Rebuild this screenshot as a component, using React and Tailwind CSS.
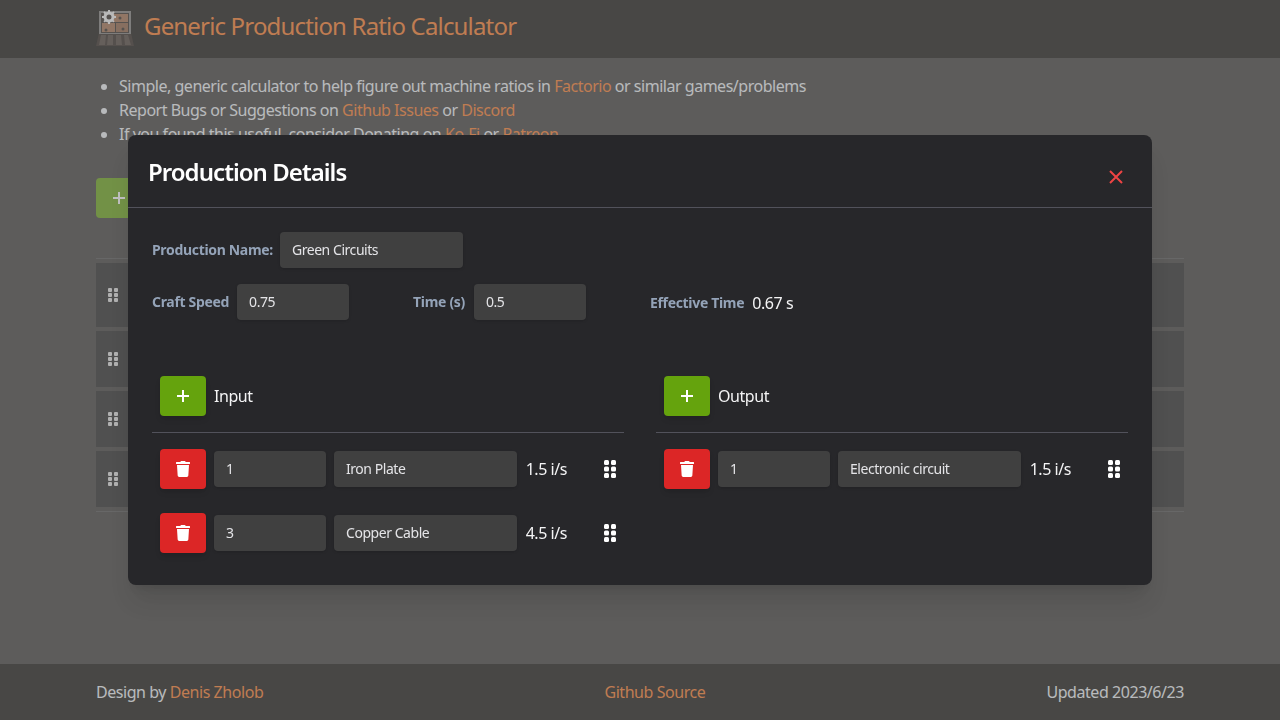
import { FaTrash } from "react-icons/fa";

const FONT = "font-['Noto_Sans','Open_Sans',sans-serif] tracking-[-0.028em]";
const LABEL = "text-sm font-bold tracking-[-0.023em] text-[#94a3b8]";

function Logo() {
  return (
    <svg width="38" height="38" viewBox="0 0 38 38" className="mb-[2px] shrink-0 blur-[0.4px]">
      <path d="M3 24h32l3 13H0z" fill="#2b201a" />
      <path d="M5 26h5l-1 10H3zM12 26h5v10h-6zM20 26h5l1 10h-6zM28 26h4l3 10h-6z" fill="#4a3e36" />
      <rect x="3" y="2" width="32" height="23" fill="#7d7b78" />
      <rect x="5" y="4" width="28" height="20" fill="#2d241f" />
      <rect x="17" y="5" width="15" height="8" fill="#a36d4a" />
      <rect x="6" y="14" width="13" height="9" fill="#a36d4a" />
      <rect x="20" y="14" width="12" height="9" fill="#8f5f40" />
      <circle cx="10" cy="21" r="1.5" fill="#2d241f" />
      <circle cx="27" cy="20" r="1.5" fill="#2d241f" />
      <circle cx="24" cy="9" r="1.5" fill="#2d241f" />
      <g fill="none" stroke="#f5f5f5">
        <circle cx="13" cy="8" r="4" strokeWidth="3" />
        <path d="M13 1v14M6 8h14M8 3l10 10M18 3L8 13" strokeWidth="2" strokeDasharray="2.5 9" />
      </g>
    </svg>
  );
}

function Grip({ size = "big" }) {
  const big = size === "big";
  return (
    <svg width={big ? 12 : 10} height={big ? 18 : 14} viewBox={big ? "0 0 12 18" : "0 0 10 14"} fill="currentColor" className="shrink-0">
      {[0, 1, 2].map((r) =>
        [0, 1].map((c) =>
          big ? (
            <rect key={`${r}${c}`} x={c * 7} y={r * 6.5} width="5" height="5" rx="1.5" />
          ) : (
            <rect key={`${r}${c}`} x={c * 6} y={r * 5} width="4" height="4" rx="1" />
          )
        )
      )}
    </svg>
  );
}

function Plus() {
  return (
    <svg width="14" height="14" viewBox="0 0 14 14" stroke="currentColor" strokeWidth="2">
      <path d="M7 1v12M1 7h12" />
    </svg>
  );
}

function Field({ value, className }) {
  return (
    <input
      readOnly
      defaultValue={value}
      className={`h-9 rounded bg-[#404040] px-3 pb-px text-sm text-[#e4e4e7] outline-none shadow-sm ${className}`}
    />
  );
}

function Item({ qty, name, rate }) {
  return (
    <div className="flex h-10 items-center pl-2">
      <button className="flex h-10 w-[46px] shrink-0 items-center justify-center rounded-sm bg-[#dc2626] text-white shadow-md">
        <FaTrash size={16} />
      </button>
      <Field value={qty} className="ml-2 w-[112px]" />
      <Field value={name} className="ml-2 w-[183px]" />
      <span className="w-[60px] pr-[10px] text-right text-base text-[#f4f4f5]">{rate}</span>
      <span className="ml-[27px] text-white"><Grip /></span>
    </div>
  );
}

function Column({ title, items }) {
  return (
    <div className="w-[472px]">
      <div className="flex h-10 items-center gap-2 pl-2">
        <button className="flex h-10 w-[46px] items-center justify-center rounded-sm bg-[#65a30d] text-white shadow-md">
          <Plus />
        </button>
        <span className="text-base text-[#f4f4f5]">{title}</span>
      </div>
      <div className="mt-4 mb-4 border-t border-[#52525b]" />
      <div className="flex flex-col gap-6">
        {items.map((it) => (
          <Item key={it.name} {...it} />
        ))}
      </div>
    </div>
  );
}

function BgRow({ tall }) {
  return (
    <div className={`flex items-center bg-[#202020] pl-3 text-[#e0e0e0] ${tall ? "h-16" : "h-14"}`}>
      <Grip size="small" />
    </div>
  );
}

export default function App() {
  const link = "text-[#ff7a24]";
  return (
    <div className={`${FONT} flex min-h-screen flex-col bg-[#3a3836] text-[#f1f5f9]`}>
      <header className="flex h-[58px] items-center gap-[10px] bg-[#100e0a] pl-[96px]">
        <Logo />
        <h1 className={`mb-[6px] text-2xl tracking-[-0.0345em] ${link}`}>Generic Production Ratio Calculator</h1>
      </header>

      <main className="flex-1 px-[96px] pt-4">
        <ul className="list-disc pl-[23px] text-base leading-6 tracking-[-0.03em]">
          <li>Simple, generic calculator to help figure out machine ratios in <a className={link}>Factorio</a> or similar games/problems</li>
          <li>Report Bugs or Suggestions on <a className={link}>Github Issues</a> or <a className={link}>Discord</a></li>
          <li>If you found this useful, consider Donating on <a className={link}>Ko-Fi</a> or <a className={link}>Patreon</a></li>
        </ul>
        <button className="mt-8 flex h-10 w-[46px] items-center justify-center rounded-sm bg-[#65a30d] text-white">
          <Plus />
        </button>
        <div className="mt-10 flex flex-col gap-1 border-y border-[#4e4e4e] py-1">
          <BgRow tall />
          <BgRow />
          <BgRow />
          <BgRow />
        </div>
      </main>

      <footer className="flex h-14 items-center justify-between bg-[#100e0a] px-[96px] text-base">
        <span>Design by <a className={link}>Denis Zholob</a></span>
        <a className={link}>Github Source</a>
        <span>Updated 2023/6/23</span>
      </footer>

      {/* modal overlay */}
      <div className="fixed inset-0 flex items-center justify-center bg-[#808080]/50">
        <div className="flex h-[450px] w-[1024px] flex-col rounded-lg bg-[#27272a] shadow-xl">
          <div className="flex h-[73px] shrink-0 items-start justify-between border-b border-[#52525b] pl-5 pr-[28px]">
            <h2 className="mt-[19px] text-2xl leading-9 font-semibold tracking-[-0.04em] text-white">Production Details</h2>
            <svg width="16" height="16" viewBox="0 0 16 16" stroke="#ef4444" strokeWidth="2" className="mt-[34px]">
              <path d="M2 2l12 12M14 2L2 14" />
            </svg>
          </div>

          <div className="px-6 pt-6">
            <div className="flex items-center gap-[7px]">
              <label className={LABEL}>Production Name:</label>
              <Field value="Green Circuits" className="w-[183px]" />
            </div>
            <div className="mt-4 flex items-center">
              <label className={LABEL}>Craft Speed</label>
              <Field value="0.75" className="ml-2 w-[112px]" />
              <label className={`ml-[64px] ${LABEL}`}>Time (s)</label>
              <Field value="0.5" className="ml-[9px] w-[112px]" />
              <label className={`ml-[64px] mt-px ${LABEL}`}>Effective Time</label>
              <span className="ml-2 mt-px text-base text-[#f4f4f5]">0.67 s</span>
            </div>
            <div className="mt-[56px] flex gap-8">
              <Column
                title="Input"
                items={[
                  { qty: "1", name: "Iron Plate", rate: "1.5 i/s" },
                  { qty: "3", name: "Copper Cable", rate: "4.5 i/s" },
                ]}
              />
              <Column title="Output" items={[{ qty: "1", name: "Electronic circuit", rate: "1.5 i/s" }]} />
            </div>
          </div>
        </div>
      </div>
    </div>
  );
}
